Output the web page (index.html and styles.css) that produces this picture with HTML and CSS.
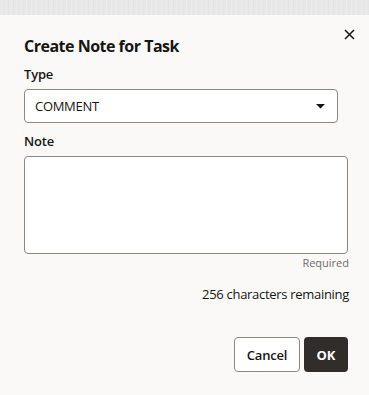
FILE: index.html
```html
<!DOCTYPE html>
<html>
<head>
    <meta charset="UTF-8">
    <title>Create Note for Task</title>
    <link rel="stylesheet" href="styles.css">
</head>
<body>
    <div class="backdrop"></div>
    <div class="dialog">
        <div class="dialog-header">
            <h1 class="dialog-title">Create Note for Task</h1>
            <button class="close-btn" aria-label="Close">
                <svg width="11" height="11" viewBox="0 0 11 11">
                    <path d="M1 1 L10 10 M10 1 L1 10" stroke="#161513" stroke-width="1.5" fill="none"/>
                </svg>
            </button>
        </div>

        <div class="field">
            <label class="field-label">Type</label>
            <div class="select-box">
                <span class="select-value">COMMENT</span>
                <svg class="select-arrow" width="9" height="5" viewBox="0 0 9 5">
                    <path d="M0 0 L9 0 L4.5 4.5 Z" fill="#161513"/>
                </svg>
            </div>
        </div>

        <div class="field">
            <label class="field-label">Note</label>
            <div class="note-box"></div>
            <div class="field-hint">Required</div>
        </div>

        <div class="counter">256 characters remaining</div>

        <div class="dialog-footer">
            <button class="btn btn-outline">Cancel</button>
            <button class="btn btn-dark">OK</button>
        </div>
    </div>
</body>
</html>
```

FILE: styles.css
```css
* {
    margin: 0;
    padding: 0;
    box-sizing: border-box;
}

body {
    font-family: "Open Sans", "Noto Sans", Arial, sans-serif;
    background: #fbf9f8;
    color: #161513;
    width: 369px;
    height: 395px;
    overflow: hidden;
}

.backdrop {
    height: 15px;
    background: repeating-linear-gradient(90deg, #e6e6e6 0, #ededed 2px, #e3e3e3 3px, #eaeaea 5px);
}

.dialog {
    background: #fbf9f8;
    padding: 10px 21px 0 24px;
}

.dialog-header {
    display: flex;
    justify-content: space-between;
    align-items: flex-start;
    height: 40px;
    margin-right: -7px;
}

.dialog-title {
    font-size: 16px;
    font-weight: 700;
    margin-top: 10px;
    letter-spacing: -0.5px;
}

.close-btn {
    border: none;
    background: none;
    margin-top: 4px;
    width: 11px;
    height: 11px;
    display: flex;
}

.field {
    display: flex;
    flex-direction: column;
}

.field-label {
    font-size: 13px;
    font-weight: 600;
    line-height: 18px;
    margin-bottom: 6px;
    letter-spacing: -0.2px;
}

.select-box {
    width: 314px;
    height: 34px;
    border: 1px solid #8b8985;
    border-radius: 4px;
    background: #fff;
    display: flex;
    align-items: center;
    justify-content: space-between;
    padding: 0 12px 0 10px;
    margin-bottom: 9px;
}

.select-value {
    font-size: 13px;
    letter-spacing: -0.3px;
}

.note-box {
    width: 324px;
    height: 98px;
    border: 1px solid #8b8985;
    border-radius: 4px;
    background: #fff;
}

.field-hint {
    align-self: flex-end;
    font-size: 11px;
    color: #6f6c69;
    line-height: 14px;
    margin-top: 2px;
    margin-right: -1px;
}

.counter {
    text-align: right;
    font-size: 13px;
    margin-top: 15px;
    margin-right: -1px;
    line-height: 18px;
    letter-spacing: -0.3px;
}

.dialog-footer {
    display: flex;
    justify-content: flex-end;
    gap: 4px;
    margin-top: 34px;
}

.btn {
    height: 35px;
    border-radius: 4px;
    font-family: inherit;
    font-size: 13px;
    cursor: pointer;
}

.btn-outline {
    width: 66px;
    background: #fff;
    border: 1px solid #8b8985;
    color: #161513;
    font-weight: 600;
    letter-spacing: -0.2px;
}

.btn-dark {
    width: 44px;
    background: #312d2a;
    border: none;
    color: #fff;
    font-weight: 700;
}
```
